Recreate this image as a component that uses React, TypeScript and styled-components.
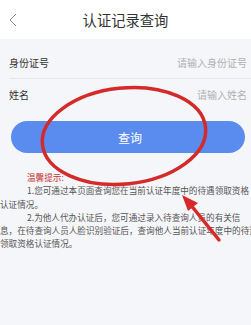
import React from "react";
import styled, { createGlobalStyle } from "styled-components";

const GlobalStyle = createGlobalStyle`
  html, body { margin: 0; padding: 0; background: #f5f6fa; }
  body { font-family: "Noto Sans CJK SC", "Noto Sans", sans-serif; }
`;

const Page = styled.div`
  position: relative;
  width: 251px;
  height: 325px;
  overflow: hidden;
  background: #f5f6fa;
`;

const Header = styled.div`
  height: 39px;
  background: #ffffff;
  display: grid;
  grid-template-columns: 40px 1fr 40px;
  align-items: center;
`;

const Back = styled.div`
  display: flex;
  align-items: center;
  padding-left: 8px;
`;

const Title = styled.div`
  text-align: center;
  font-size: 14.3px;
  color: #333;
  line-height: 1;
  margin-top: 2px;
`;

const Form = styled.div`
  padding-top: 8px;
`;

const Row = styled.div`
  height: 31px;
  display: flex;
  align-items: center;
  justify-content: space-between;
  padding: 0 4px 0 9px;
  font-size: 10px;
`;

const Label = styled.span`
  color: #333;
`;

const Placeholder = styled.span`
  color: #b0b0b0;
`;

const Divider = styled.div`
  height: 1px;
  margin-left: 10px;
  background: #e4e6eb;
`;

const ButtonWrap = styled.div`
  padding: 11px 6px 0 11px;
`;

const Button = styled.div`
  height: 32px;
  border-radius: 16px;
  background: #5a8cf0;
  color: #fff;
  font-size: 12px;
  display: flex;
  align-items: center;
  justify-content: center;
  padding-left: 4px;
`;

const Tips = styled.div`
  margin-top: 18px;
  font-size: 8.6px;
  line-height: 13.25px;
`;

const TipLine = styled.div<{ $indent?: boolean; $red?: boolean }>`
  white-space: nowrap;
  padding-left: ${(p) => (p.$indent ? "27px" : "0")};
  color: ${(p) => (p.$red ? "#c8322f" : "#555")};
`;

const Overlay = styled.svg`
  position: absolute;
  left: 0;
  top: 0;
  pointer-events: none;
`;

export default function App() {
  return (
    <>
      <GlobalStyle />
      <Page>
        <Header>
          <Back>
            <svg width="10" height="14" viewBox="0 0 10 14">
              <path d="M8 1 L2 7 L8 13" fill="none" stroke="#8a8a8a" strokeWidth="1" />
            </svg>
          </Back>
          <Title>认证记录查询</Title>
          <div />
        </Header>
        <Form>
          <Row>
            <Label>身份证号</Label>
            <Placeholder>请输入身份证号</Placeholder>
          </Row>
          <Divider />
          <Row>
            <Label>姓名</Label>
            <Placeholder>请输入姓名</Placeholder>
          </Row>
        </Form>
        <ButtonWrap>
          <Button>查询</Button>
        </ButtonWrap>
        <Tips>
          <TipLine $indent $red>温馨提示:</TipLine>
          <TipLine $indent>1.您可通过本页面查询您在当前认证年度中的待遇领取资格</TipLine>
          <TipLine>认证情况。</TipLine>
          <TipLine $indent>2.为他人代办认证后，您可通过录入待查询人员的有关信</TipLine>
          <TipLine>息，在待查询人员人脸识别验证后，查询他人当前认证年度中的待遇</TipLine>
          <TipLine>领取资格认证情况。</TipLine>
        </Tips>
        <Overlay width="251" height="325" viewBox="0 0 251 325">
          <ellipse
            cx="124"
            cy="136"
            rx="82"
            ry="48"
            transform="rotate(-6 124 136)"
            fill="none"
            stroke="#d42a2a"
            strokeWidth="3.5"
          />
          <line x1="219" y1="240" x2="190" y2="204" stroke="#d8282a" strokeWidth="3.5" strokeLinecap="round" />
          <polygon points="182,195 198,203 188,211" fill="#d8282a" />
        </Overlay>
      </Page>
    </>
  );
}
